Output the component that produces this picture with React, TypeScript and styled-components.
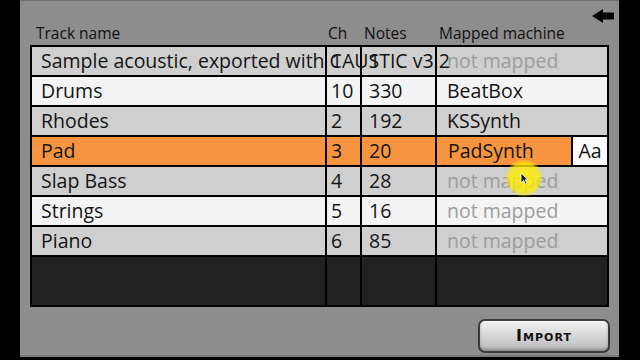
import styled, { createGlobalStyle } from 'styled-components';

let Global = createGlobalStyle`
  html, body {
    margin: 0;
    padding: 0;
    background: #000;
  }
  body {
    font-family: 'Open Sans', Roboto, sans-serif;
  }
`;

let Screen = styled.div`
  position: relative;
  width: 640px;
  height: 360px;
  display: flex;
  background: #000;
  overflow: hidden;
`;

let Panel = styled.main`
  margin-left: 20px;
  width: 599px;
  height: 357px;
  box-sizing: border-box;
  background: #8d8d8d;
  border-top: 1px solid #6f6f6f;
  border-bottom: 2px solid #7a7a7a;
  padding: 0 10px;
  display: flex;
  flex-direction: column;
`;

let TopBar = styled.div`
  height: 22px;
  display: flex;
  justify-content: flex-end;
  align-items: flex-end;
  margin-right: -5px;
`;

let BackButton = styled.button`
  border: 0;
  padding: 0;
  background: none;
  display: flex;
  width: 22px;
  height: 14px;
`;

let columns = '293px 33px 73px 170px';

let HeaderRow = styled.div`
  height: 22px;
  display: grid;
  grid-template-columns: ${columns};
  column-gap: 2px;
  padding: 0 2px;
  align-items: end;
`;

let HeaderLabel = styled.div<{ $indent: number }>`
  font-size: 15.5px;
  line-height: 17px;
  color: #111;
  padding-left: ${(p) => p.$indent}px;
  padding-bottom: 3px;
  white-space: nowrap;
`;

let Table = styled.section`
  height: 262px;
  box-sizing: border-box;
  border: 2px solid #000;
  background: #000;
  display: flex;
  flex-direction: column;
  gap: 2px;
`;

let Row = styled.div`
  height: 28px;
  display: grid;
  grid-template-columns: ${columns};
  column-gap: 2px;
`;

let Cell = styled.div<{ $bg: string; $indent: number; $muted?: boolean; $top?: boolean }>`
  position: relative;
  z-index: ${(p) => (p.$top ? 1 : 0)};
  background: ${(p) => p.$bg};
  color: ${(p) => (p.$muted ? '#9d9d9d' : '#141414')};
  font-size: 19.5px;
  line-height: 27px;
  padding-left: ${(p) => p.$indent}px;
  white-space: nowrap;
  overflow: visible;
`;

let NameText = styled.span`
  position: relative;
  z-index: 2;
`;

let MachineCell = styled(Cell)`
  display: flex;
  padding-left: 0;
`;

let MachineName = styled.span`
  flex: 1;
  padding-left: 11px;
`;

let FontButton = styled.span`
  width: 34px;
  border-left: 2px solid #000;
  background: #fafafa;
  color: #111;
  text-align: center;
`;

let Filler = styled.div`
  flex: 1;
  display: grid;
  grid-template-columns: ${columns};
  column-gap: 2px;
`;

let EmptyCell = styled.div`
  background: #212121;
`;

let Footer = styled.footer`
  display: flex;
  justify-content: flex-end;
  margin-top: 12px;
  margin-right: -1px;
`;

let ImportButton = styled.button`
  width: 132px;
  height: 34px;
  box-sizing: border-box;
  border: 2px solid #3a3a3a;
  border-radius: 7px;
  background: linear-gradient(#f2f2f2, #d9d9d9 45%, #b9b9b9);
  box-shadow: inset 0 1px 0 #fff, inset 0 -2px 3px rgba(0, 0, 0, 0.25);
  font-family: 'DejaVu Sans', sans-serif;
  font-weight: bold;
  font-size: 16px;
  font-variant: small-caps;
  letter-spacing: 1px;
  color: #111;
  padding: 0 0 2px;
`;

let Touch = styled.div`
  position: absolute;
  left: 505px;
  top: 159px;
  width: 38px;
  height: 38px;
  border-radius: 50%;
  background: radial-gradient(circle, rgba(255, 240, 0, 0.9) 0%, rgba(255, 236, 0, 0.75) 55%, rgba(255, 236, 0, 0) 72%);
  pointer-events: none;
  z-index: 5;
`;

let Pointer = styled.svg`
  position: absolute;
  left: 520px;
  top: 172px;
  z-index: 6;
`;

type Track = { name: string; ch: number; notes: number; machine?: string };

let tracks: Track[] = [
  { name: 'Sample acoustic, exported with CAUSTIC v3.2', ch: 1, notes: 1 },
  { name: 'Drums', ch: 10, notes: 330, machine: 'BeatBox' },
  { name: 'Rhodes', ch: 2, notes: 192, machine: 'KSSynth' },
  { name: 'Pad', ch: 3, notes: 20, machine: 'PadSynth' },
  { name: 'Slap Bass', ch: 4, notes: 28 },
  { name: 'Strings', ch: 5, notes: 16 },
  { name: 'Piano', ch: 6, notes: 85 }
];

let selected = 3;

let rowColor = (i: number) => {
  if (i === selected) return '#f6943f';
  return i % 2 === 0 ? '#cfcfcf' : '#f4f4f4';
};

export default function App() {
  return (
    <Screen>
      <Global />
      <Panel>
        <TopBar>
          <BackButton aria-label="Back">
            <svg width="22" height="14" viewBox="0 0 22 14">
              <polygon points="0,7 11,0 11,14" fill="#000" />
              <rect x="10" y="3.5" width="12" height="7" fill="#000" />
            </svg>
          </BackButton>
        </TopBar>

        <HeaderRow>
          <HeaderLabel $indent={4}>Track name</HeaderLabel>
          <HeaderLabel $indent={1}>Ch</HeaderLabel>
          <HeaderLabel $indent={2}>Notes</HeaderLabel>
          <HeaderLabel $indent={2}>Mapped machine</HeaderLabel>
        </HeaderRow>

        <Table>
          {tracks.map((t, i) => {
            let bg = rowColor(i);
            return (
              <Row key={t.name}>
                <Cell $bg={bg} $indent={9} $top>
                  <NameText>{t.name}</NameText>
                </Cell>
                <Cell $bg={bg} $indent={4}>{t.ch}</Cell>
                <Cell $bg={bg} $indent={7}>{t.notes}</Cell>
                {i === selected ? (
                  <MachineCell $bg={bg} $indent={0}>
                    <MachineName>{t.machine}</MachineName>
                    <FontButton>Aa</FontButton>
                  </MachineCell>
                ) : (
                  <Cell $bg={bg} $indent={10} $muted={!t.machine}>
                    {t.machine ?? 'not mapped'}
                  </Cell>
                )}
              </Row>
            );
          })}
          <Filler>
            <EmptyCell />
            <EmptyCell />
            <EmptyCell />
            <EmptyCell />
          </Filler>
        </Table>

        <Footer>
          <ImportButton>Import</ImportButton>
        </Footer>
      </Panel>

      <Touch />
      <Pointer width="9" height="13" viewBox="0 0 9 13">
        <path d="M1 1 L1 11 L3.5 8.5 L5.5 12 L7 11.2 L5 7.8 L8 7.8 Z" fill="#222" stroke="#fff" strokeWidth="0.8" />
      </Pointer>
    </Screen>
  );
}
